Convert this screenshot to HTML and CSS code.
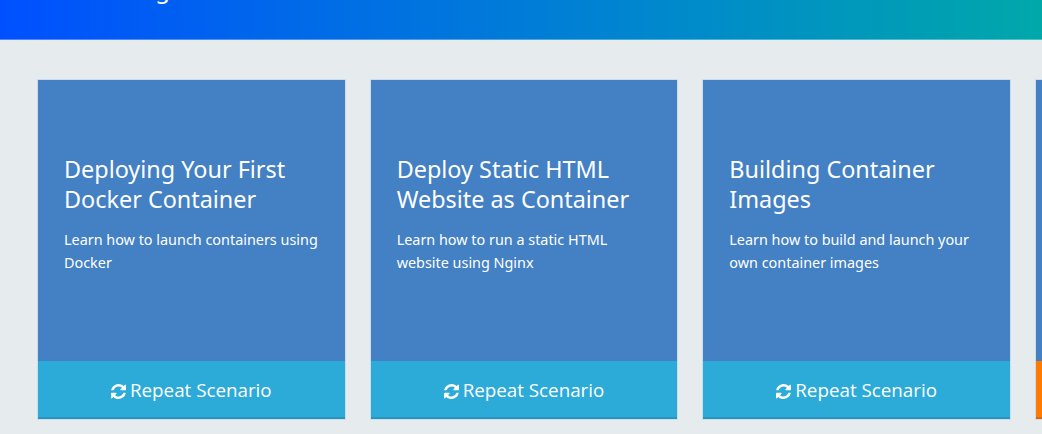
FILE: index.html
```html
<!DOCTYPE html>
<html lang="en">
<head>
    <title>Docker Scenarios</title>
    <link rel="stylesheet" href="styles.css">
</head>
<body>
    <header class="banner">
        <h1 class="banner-title">Learning Path</h1>
    </header>

    <main class="course-row">
        <div class="card">
            <div class="card-body">
                <h2>Deploying Your First Docker Container</h2>
                <p>Learn how to launch containers using Docker</p>
            </div>
            <a class="card-action" href="#">
                <svg class="icon" viewBox="128 128 1536 1536"><path d="M1639 1056q0 5-1 7-64 268-268 434.5t-478 166.5q-146 0-282.5-55t-243.5-157l-129 129q-19 19-45 19t-45-19-19-45v-448q0-26 19-45t45-19h448q26 0 45 19t19 45-19 45l-137 137q71 66 161 102t187 36q134 0 250-65t186-179q11-17 53-117 8-23 30-23h192q13 0 22.5 9.5t9.5 22.5zm25-800v448q0 26-19 45t-45 19h-448q-26 0-45-19t-19-45 19-45l138-138q-148-137-349-137-134 0-250 65t-186 179q-11 17-53 117-8 23-30 23h-199q-13 0-22.5-9.5t-9.5-22.5v-7q65-268 270-434.5t480-166.5q146 0 284 55.5t245 156.5l130-129q19-19 45-19t45 19 19 45z"/></svg>
                Repeat Scenario
            </a>
        </div>
        <div class="card">
            <div class="card-body">
                <h2>Deploy Static HTML Website as Container</h2>
                <p>Learn how to run a static HTML website using Nginx</p>
            </div>
            <a class="card-action" href="#">
                <svg class="icon" viewBox="128 128 1536 1536"><path d="M1639 1056q0 5-1 7-64 268-268 434.5t-478 166.5q-146 0-282.5-55t-243.5-157l-129 129q-19 19-45 19t-45-19-19-45v-448q0-26 19-45t45-19h448q26 0 45 19t19 45-19 45l-137 137q71 66 161 102t187 36q134 0 250-65t186-179q11-17 53-117 8-23 30-23h192q13 0 22.5 9.5t9.5 22.5zm25-800v448q0 26-19 45t-45 19h-448q-26 0-45-19t-19-45 19-45l138-138q-148-137-349-137-134 0-250 65t-186 179q-11 17-53 117-8 23-30 23h-199q-13 0-22.5-9.5t-9.5-22.5v-7q65-268 270-434.5t480-166.5q146 0 284 55.5t245 156.5l130-129q19-19 45-19t45 19 19 45z"/></svg>
                Repeat Scenario
            </a>
        </div>
        <div class="card">
            <div class="card-body">
                <h2>Building Container Images</h2>
                <p>Learn how to build and launch your own container images</p>
            </div>
            <a class="card-action" href="#">
                <svg class="icon" viewBox="128 128 1536 1536"><path d="M1639 1056q0 5-1 7-64 268-268 434.5t-478 166.5q-146 0-282.5-55t-243.5-157l-129 129q-19 19-45 19t-45-19-19-45v-448q0-26 19-45t45-19h448q26 0 45 19t19 45-19 45l-137 137q71 66 161 102t187 36q134 0 250-65t186-179q11-17 53-117 8-23 30-23h192q13 0 22.5 9.5t9.5 22.5zm25-800v448q0 26-19 45t-45 19h-448q-26 0-45-19t-19-45 19-45l138-138q-148-137-349-137-134 0-250 65t-186 179q-11 17-53 117-8 23-30 23h-199q-13 0-22.5-9.5t-9.5-22.5v-7q65-268 270-434.5t480-166.5q146 0 284 55.5t245 156.5l130-129q19-19 45-19t45 19 19 45z"/></svg>
                Repeat Scenario
            </a>
        </div>
        <div class="card card-next">
            <div class="card-body"></div>
            <a class="card-action" href="#"></a>
        </div>
    </main>
</body>
</html>
```

FILE: styles.css
```css
html, body {
    margin: 0;
    height: 434px;
    overflow: hidden;
}
body {
    background-color: #e6ebee;
    font-family: 'Noto Sans', 'Open Sans', sans-serif;
    color: white;
}
.banner {
    height: 39px;
    border-bottom: 1px solid rgba(255, 255, 255, 0.3);
    background: linear-gradient(90deg, #0050ff 0%, #0085d0 60%, #00a8aa 100%);
    background-clip: border-box;
    overflow: hidden;
}
.banner-title {
    margin: -26px 0 0 70px;
    font-size: 24px;
    line-height: 30px;
    font-weight: 400;
}
.course-row {
    display: flex;
    gap: 26px;
    padding: 40px 0 0 38px;
}
.card {
    flex: 0 0 306.67px;
    height: 339px;
    display: flex;
    flex-direction: column;
    background-color: #4380c4;
    box-shadow: 0 0 0 1px rgba(180, 205, 230, 0.5);
}
.card-body {
    flex: 1;
    padding: 75px 26px 0;
}
.card-body h2 {
    margin: 0;
    font-size: 23.4px;
    line-height: 29.5px;
    font-weight: 400;
}
.card-body p {
    margin: 14px 0 0;
    font-size: 14.4px;
    line-height: 23px;
}
.card-action {
    height: 55px;
    padding-top: 1px;
    display: flex;
    align-items: center;
    justify-content: center;
    gap: 4px;
    border-bottom: 2px solid #2596bd;
    background-color: #2caad8;
    color: white;
    font-family: 'Open Sans', sans-serif;
    font-size: 18.8px;
    text-decoration: none;
}
.icon {
    width: 15px;
    height: 15px;
    fill: white;
    margin-top: 3px;
}
.card-next .card-action {
    background-color: #ff7b00;
    border-bottom-color: #d9690a;
}
```
